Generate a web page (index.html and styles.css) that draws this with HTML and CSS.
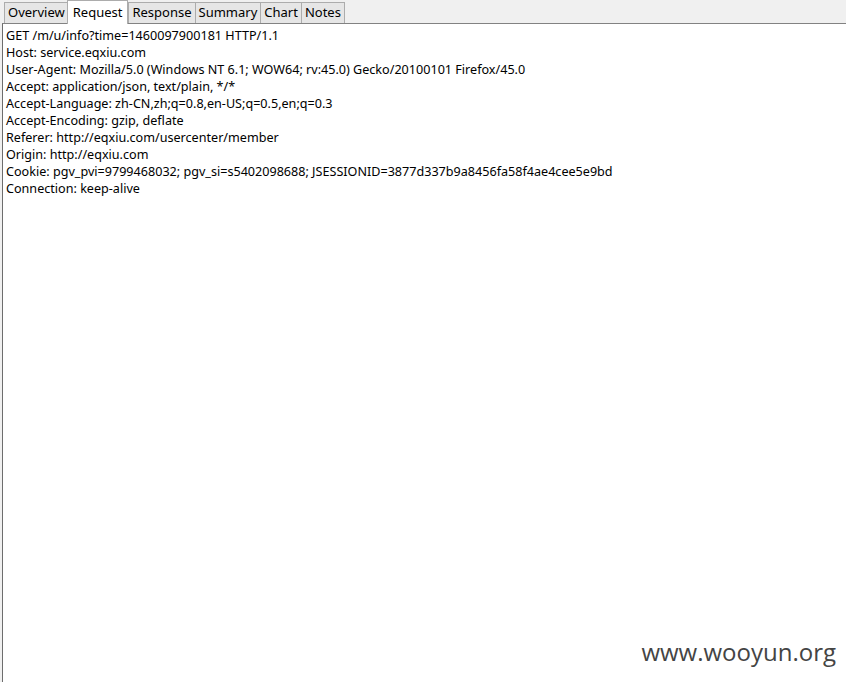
FILE: index.html
```html
<!DOCTYPE html>
<html lang="en">

<head>
    <meta charset="UTF-8">
    <title>Request</title>
    <link rel="stylesheet" href="styles.css">
</head>

<body>
    <div class="tabs">
        <div class="tab">Overview</div>
        <div class="tab active">Request</div>
        <div class="tab">Response</div>
        <div class="tab">Summary</div>
        <div class="tab">Chart</div>
        <div class="tab">Notes</div>
    </div>
    <div class="content">
        <div class="line">GET /m/u/info?time=1460097900181 HTTP/1.1</div>
        <div class="line">Host: service.eqxiu.com</div>
        <div class="line">User-Agent: Mozilla/5.0 (Windows NT 6.1; WOW64; rv:45.0) Gecko/20100101 Firefox/45.0</div>
        <div class="line">Accept: application/json, text/plain, */*</div>
        <div class="line">Accept-Language: zh-CN,zh;q=0.8,en-US;q=0.5,en;q=0.3</div>
        <div class="line">Accept-Encoding: gzip, deflate</div>
        <div class="line">Referer: http://eqxiu.com/usercenter/member</div>
        <div class="line">Origin: http://eqxiu.com</div>
        <div class="line">Cookie: pgv_pvi=9799468032; pgv_si=s5402098688; JSESSIONID=3877d337b9a8456fa58f4ae4cee5e9bd</div>
        <div class="line">Connection: keep-alive</div>
    </div>
    <div class="watermark">www.wooyun.org</div>
</body>

</html>
```

FILE: styles.css
```css
body {
    margin: 0;
    font-family: "Noto Sans", sans-serif;
    font-size: 12.6px;
    color: #000;
    background: #f0f0f0;
    height: 682px;
    overflow: hidden;
    display: flex;
    flex-direction: column;
}

.tabs {
    display: flex;
    align-items: flex-end;
    height: 23px;
    padding-left: 4px;
    background: #f0f0f0;
}

.tab {
    height: 21px;
    line-height: 19px;
    padding: 0 3px;
    font-size: 13px;
    background: #e6e6e6;
    border: 1px solid #acacac;
    border-bottom: none;
    margin-right: -1px;
    box-sizing: border-box;
}

.tab.active {
    height: 24px;
    line-height: 22px;
    padding: 0 5px;
    background: #fff;
    margin: 0 0 -1px -1px;
    position: relative;
    z-index: 1;
}

.content {
    flex: 1;
    margin-left: 2px;
    background: #fff;
    border-top: 1px solid #828282;
    border-left: 1px solid #6d6d6d;
    padding: 3px 0 0 3px;
}

.line {
    height: 17px;
    line-height: 17px;
    white-space: nowrap;
}

.watermark {
    position: absolute;
    right: 10px;
    bottom: 14px;
    font-family: "Open Sans", sans-serif;
    font-size: 24px;
    color: #444;
}
```
